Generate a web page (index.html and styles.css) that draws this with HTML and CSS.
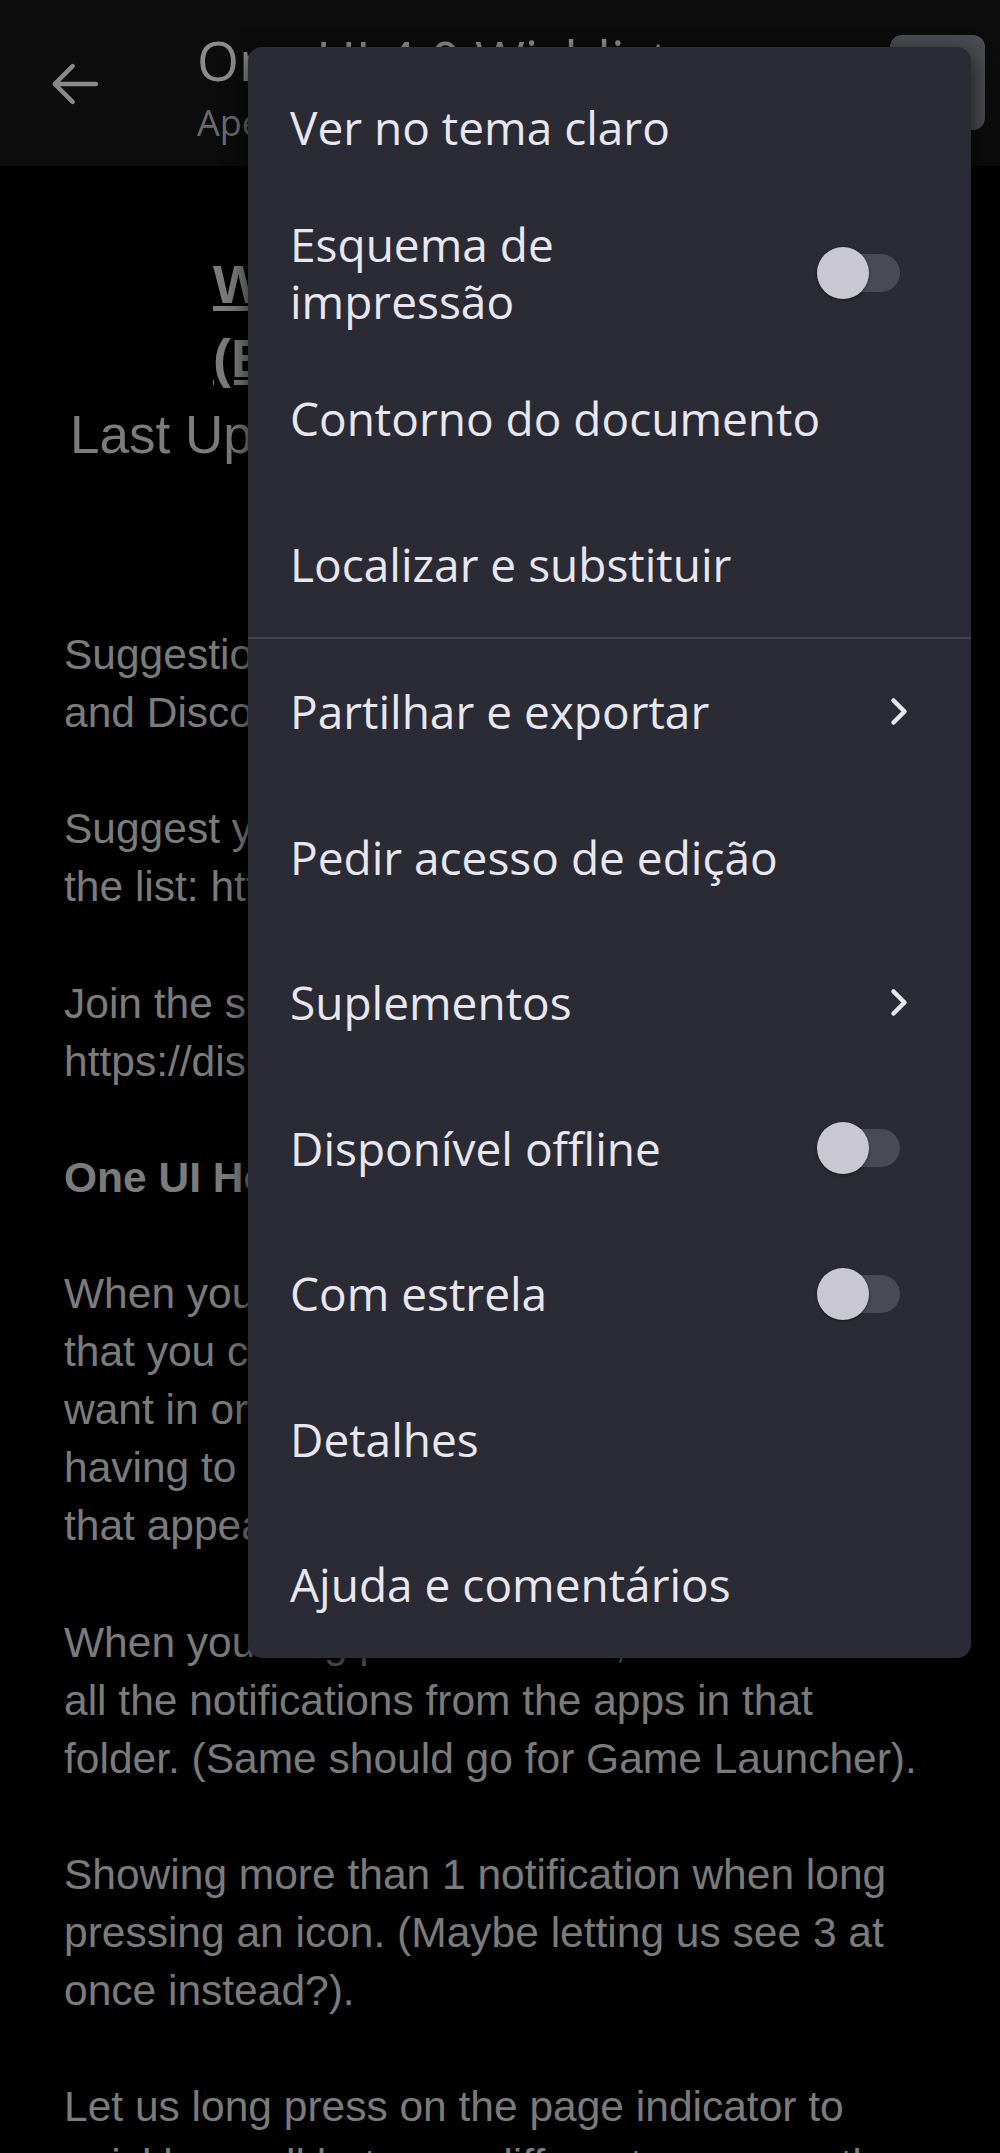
FILE: index.html
```html
<!DOCTYPE html>
<html lang="pt">
<head>
    <meta charset="UTF-8">
    <meta name="viewport" content="width=device-width, initial-scale=1.0">
    <title>One UI 4.0 Wishlist | Documentos</title>
    <link rel="stylesheet" href="styles.css">
</head>
<body>
    <div class="screen">
        <!-- App bar -->
        <header class="app-bar">
            <span class="back-btn">
                <svg viewBox="0 0 24 24" width="66" height="66">
                    <path d="M20 12H5M11.5 5.5L5 12l6.5 6.5" fill="none" stroke="currentColor" stroke-width="1.6" stroke-linecap="round" stroke-linejoin="round"/>
                </svg>
            </span>
            <div class="doc-name">
                <div class="doc-title">One UI 4.0 Wishlist</div>
                <div class="doc-mode">Apenas visualização</div>
            </div>
            <div class="avatar"></div>
        </header>

        <!-- Document body -->
        <main class="doc">
            <div class="doc-heading">Wishlist for One UI<br>(Everything we want)</div>
            <div class="doc-updated">Last Updated: 12/09/2021</div>

            <p class="first">Suggestions are collected from Reddit, Twitter<br>and Discord.</p>
            <p>Suggest your own ideas to get them added to<br>the list: https://forms.gle/oneui4wishlist</p>
            <p>Join the server to talk about the ideas here:<br>https://discord.gg/oneui</p>
            <p class="bold">One UI Home</p>
            <p>When you open the app drawer, add a section<br>that you can pin the most used apps you<br>want in order, so you can find them without<br>having to scroll through every page or folder<br>that appears in the drawer.</p>
            <p>When you long press a folder, it should show all the notifications from the apps in that folder. (Same should go for Game Launcher).</p>
            <p>Showing more than 1 notification when long pressing an icon. (Maybe letting us see 3 at once instead?).</p>
            <p>Let us long press on the page indicator to quickly scroll between different pages on the home screen.</p>
        </main>

        <!-- Overflow menu -->
        <div class="menu">
            <div class="menu-item"><span class="label">Ver no tema claro</span></div>
            <div class="menu-item has-switch">
                <span class="label">Esquema de impressão</span>
                <span class="switch"><span class="track"></span><span class="thumb"></span></span>
            </div>
            <div class="menu-item"><span class="label">Contorno do documento</span></div>
            <div class="menu-item"><span class="label">Localizar e substituir</span></div>
            <div class="divider"></div>
            <div class="menu-item">
                <span class="label">Partilhar e exportar</span>
                <svg class="chevron" viewBox="0 0 18 29" width="18" height="29"><polyline points="3.5,3.5 14.5,14.5 3.5,25.5"/></svg>
            </div>
            <div class="menu-item"><span class="label">Pedir acesso de edição</span></div>
            <div class="menu-item">
                <span class="label">Suplementos</span>
                <svg class="chevron" viewBox="0 0 18 29" width="18" height="29"><polyline points="3.5,3.5 14.5,14.5 3.5,25.5"/></svg>
            </div>
            <div class="menu-item has-switch">
                <span class="label">Disponível offline</span>
                <span class="switch"><span class="track"></span><span class="thumb"></span></span>
            </div>
            <div class="menu-item has-switch">
                <span class="label">Com estrela</span>
                <span class="switch"><span class="track"></span><span class="thumb"></span></span>
            </div>
            <div class="menu-item"><span class="label">Detalhes</span></div>
            <div class="menu-item"><span class="label">Ajuda e comentários</span></div>
        </div>
    </div>
</body>
</html>
```

FILE: styles.css
```css
/* General Reset */
* {
    margin: 0;
    padding: 0;
    box-sizing: border-box;
}

body {
    background: #000;
    font-family: 'Open Sans', 'Noto Sans', sans-serif;
    overflow: hidden;
}

.screen {
    position: relative;
    width: 1000px;
    height: 2153px;
    overflow: hidden;
}

/* App bar */
.app-bar {
    display: flex;
    align-items: flex-start;
    height: 166px;
    background: #0c0c0d;
    padding-left: 41px;
}

.back-btn {
    display: block;
    width: 66px;
    height: 66px;
    margin-top: 51px;
    color: #8a8a8c;
}

.back-btn svg {
    display: block;
}

.doc-name {
    flex: 1;
    margin-left: 90px;
    padding-top: 28px;
    white-space: nowrap;
}

.doc-title {
    font-size: 54px;
    line-height: 64px;
    color: #8c8c8e;
}

.doc-mode {
    margin-top: 9px;
    font-size: 36px;
    line-height: 44px;
    color: #6a6a6c;
}

.avatar {
    width: 95px;
    height: 95px;
    margin: 35px 15px 0 0;
    border-radius: 12px;
    background: #4b4b53;
}

/* Document body */
.doc {
    padding: 0 66px 0 64px;
    font-family: 'Liberation Sans', Arial, sans-serif;
    color: #7b7b7b;
}

.doc-heading {
    margin: 81px 0 0 149px;
    font-size: 54px;
    line-height: 74px;
    font-weight: bold;
    text-decoration: underline;
    white-space: nowrap;
}

.doc-updated {
    margin: 7px 0 0 6px;
    font-size: 53px;
    line-height: 66px;
    white-space: nowrap;
}

.doc p {
    font-size: 42.5px;
    line-height: 58.1px;
    margin-bottom: 58.1px;
}

.doc p.first {
    margin-top: 158px;
}

.doc p.bold {
    font-weight: bold;
}

/* Overflow menu */
.menu {
    position: absolute;
    top: 47px;
    left: 248px;
    width: 723px;
    padding-top: 8px;
    background: #2b2b35;
    border-radius: 14px;
    box-shadow: 0 8px 24px rgba(0, 0, 0, 0.75);
    color: #e8e6ee;
}

.menu-item {
    display: flex;
    align-items: center;
    height: 145.5px;
    padding: 0 63px 0 42px;
}

.menu-item .label {
    font-size: 46px;
    line-height: 57px;
}

.menu-item.has-switch .label {
    max-width: 430px;
}

.divider {
    height: 2px;
    background: #44444e;
}

.chevron {
    margin-left: auto;
    fill: none;
    stroke: #e8e6ee;
    stroke-width: 4.5;
    stroke-linecap: round;
    stroke-linejoin: round;
}

.switch {
    position: relative;
    width: 83px;
    height: 52px;
    margin-left: auto;
    margin-right: 8px;
}

.switch .track {
    position: absolute;
    right: 0;
    top: 7px;
    width: 76px;
    height: 38px;
    border-radius: 19px;
    background: #4a4a56;
}

.switch .thumb {
    position: absolute;
    left: 0;
    top: 0;
    width: 52px;
    height: 52px;
    border-radius: 50%;
    background: #c9c7d1;
    box-shadow: 0 1px 3px rgba(0, 0, 0, 0.5);
}
```
